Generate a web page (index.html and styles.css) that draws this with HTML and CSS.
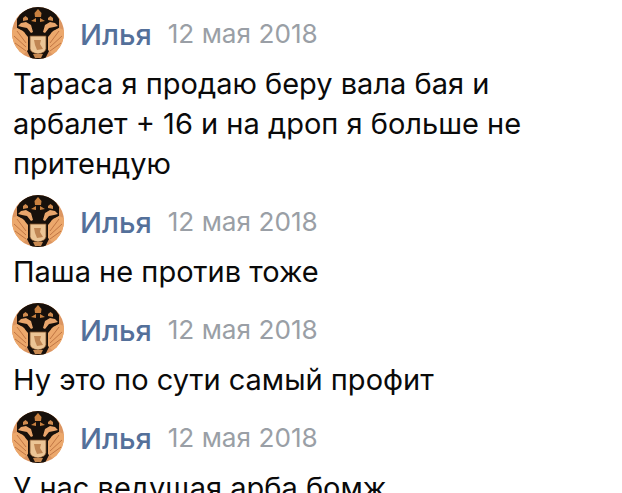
FILE: index.html
```html
<!DOCTYPE html>
<html lang="en">
<head>
    <meta charset="UTF-8">
    <meta name="viewport" content="width=device-width, initial-scale=1.0">
    <title>Комментарии</title>
    <link rel="stylesheet" href="styles.css">
</head>
<body>
    <svg class="defs" width="0" height="0">
        <defs>
            <clipPath id="round"><circle cx="26" cy="26" r="26"/></clipPath>
            <symbol id="eagle" viewBox="0 0 52 52">
                <g clip-path="url(#round)">
                    <rect width="52" height="52" fill="#dc9560"/>
                    <!-- dark ground behind the heads -->
                    <path d="M5 12 Q10 3 20 0 L32 0 Q42 3 47 12 L47 21 L39 26 L38 42 L33 52 L19 52 L14 42 L13 26 L5 21 Z" fill="#17100b"/>
                    <!-- crowns -->
                    <path d="M23 10 L22.5 6 L26 2 L29.5 6 L29 10 Z" fill="#c9803f"/>
                    <path d="M11 14 L11 11 L13.5 9 L16 11 L16 13 Z" fill="#cf8a4e"/>
                    <path d="M41 14 L41 11 L38.5 9 L36 11 L36 13 Z" fill="#cf8a4e"/>
                    <!-- heads and necks -->
                    <path d="M6 19 L9 16 L14 15 L19 18 L21 25 L19 26 L15 21 L10 20 Z" fill="#e8a56c"/>
                    <path d="M46 19 L43 16 L38 15 L33 18 L31 25 L33 26 L37 21 L42 20 Z" fill="#e8a56c"/>
                    <path d="M19 14 L24 11 L24 15 Z M33 14 L28 11 L28 15 Z" fill="#c9803f"/>
                    <!-- wings -->
                    <path d="M0 23 L5 21 L11 24 L16 30 L16 43 L12 47 L5 45 L0 37 Z" fill="#eca86c"/>
                    <path d="M52 23 L47 21 L41 24 L36 30 L36 43 L40 47 L47 45 L52 37 Z" fill="#eca86c"/>
                    <path d="M5 24 L14 36 M2 29 L14 40 M3 36 L14 44 M47 24 L38 36 M50 29 L38 40 M49 36 L38 44" stroke="#b5683a" stroke-width="0.8" fill="none"/>
                    <!-- shield -->
                    <path d="M18 29 L34 29 L34 42 Q33 46 26 47 Q19 46 18 42 Z" fill="#ecc596" stroke="#7c4e28" stroke-width="0.8"/>
                    <path d="M22 33 L29 33 L28 37 L31 42 L25 43 L23 38 Z" fill="#c08654"/>
                    <path d="M21 47 L31 47 L29 51 L23 51 Z" fill="#c98a52"/>
                </g>
            </symbol>
        </defs>
    </svg>

    <div class="comments">
        <div class="comment">
            <div class="comment-head">
                <svg class="avatar"><use href="#eagle"/></svg>
                <span class="name">Илья</span>
                <span class="date">12 мая 2018</span>
            </div>
            <p class="text">Тараса я продаю беру вала бая и<br>арбалет + 16 и на дроп я больше не<br>притендую</p>
        </div>
        <div class="comment">
            <div class="comment-head">
                <svg class="avatar"><use href="#eagle"/></svg>
                <span class="name">Илья</span>
                <span class="date">12 мая 2018</span>
            </div>
            <p class="text">Паша не против тоже</p>
        </div>
        <div class="comment">
            <div class="comment-head">
                <svg class="avatar"><use href="#eagle"/></svg>
                <span class="name">Илья</span>
                <span class="date">12 мая 2018</span>
            </div>
            <p class="text">Ну это по сути самый профит</p>
        </div>
        <div class="comment">
            <div class="comment-head">
                <svg class="avatar"><use href="#eagle"/></svg>
                <span class="name">Илья</span>
                <span class="date">12 мая 2018</span>
            </div>
            <p class="text">У нас ведущая арба бомж</p>
        </div>
    </div>
</body>
</html>
```

FILE: styles.css
```css
/* comment list */
html, body {
    height: 100%;
    overflow: hidden;
}

body {
    margin: 0;
    background-color: #fff;
    font-family: "Inter", "Liberation Sans", sans-serif;
}

.defs {
    display: block;
    height: 0;
}

.comments {
    padding: 7px 12px 0 12px;
}

.comment {
    margin-bottom: 11px;
}

.comment-head {
    display: flex;
    align-items: center;
    height: 52px;
}

.avatar {
    width: 52px;
    height: 52px;
    flex-shrink: 0;
    filter: blur(0.5px);
}

.name {
    margin-left: 16px;
    padding-top: 3px;
    font-size: 29px;
    font-weight: 500;
    color: #54709a;
}

.date {
    margin-left: 16px;
    padding-top: 1px;
    font-size: 26.2px;
    color: #9a9fa6;
}

.text {
    margin: 5px 0 0 1px;
    font-size: 29px;
    line-height: 40px;
    color: #0a0a0a;
}
```
